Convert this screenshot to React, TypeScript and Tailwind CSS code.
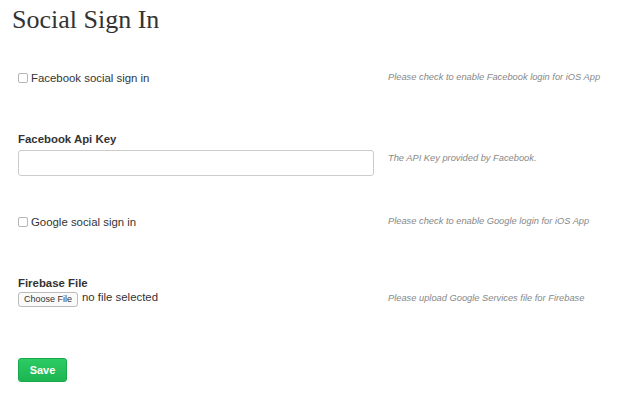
export default function App() {
  const sans = { fontFamily: '"Liberation Sans", Arial, sans-serif' }
  return (
    <div className="w-[624px] h-[405px] bg-white text-[#333]" style={sans}>
      <h1
        className="pl-[12px] pt-[3px] text-[26px] leading-[34px] text-[#333]"
        style={{ fontFamily: '"Liberation Serif", Georgia, serif' }}
      >
        Social Sign In
      </h1>

      {/* Facebook toggle */}
      <div className="mt-[33px] flex items-center">
        <label className="flex w-[356px] items-center gap-[3px] pl-[18px] text-[11.4px] leading-[16px]">
          <input type="checkbox" className="h-[10px] w-[10px] appearance-none rounded-[2px] border border-[#b5b5b5] bg-white" />
          Facebook social sign in
        </label>
        <p className="pl-[32px] text-[9.3px] italic text-[#888]">Please check to enable Facebook login for iOS App</p>
      </div>

      {/* Facebook key */}
      <div className="mt-[46px] flex">
        <div className="w-[374px] pl-[18px]">
          <div className="text-[11.4px] font-bold leading-[14px] text-[#333]">Facebook Api Key</div>
          <input
            type="text"
            className="mt-[4px] h-[26px] w-[356px] rounded-[3px] border border-[#ccc] bg-white"
          />
        </div>
        <p className="pl-[14px] pt-[20px] text-[9.3px] italic text-[#888]">The API Key provided by Facebook.</p>
      </div>

      {/* Google toggle */}
      <div className="mt-[38px] flex items-center">
        <label className="flex w-[356px] items-center gap-[3px] pl-[18px] text-[11.4px] leading-[16px]">
          <input type="checkbox" className="h-[10px] w-[10px] appearance-none rounded-[2px] border border-[#b5b5b5] bg-white" />
          Google social sign in
        </label>
        <p className="pl-[32px] text-[9.3px] italic text-[#888]">Please check to enable Google login for iOS App</p>
      </div>

      {/* Firebase file */}
      <div className="mt-[46px] flex">
        <div className="w-[374px] pl-[18px]">
          <div className="text-[11.4px] font-bold leading-[14px] text-[#333]">Firebase File</div>
          <div className="flex items-start gap-[4px]">
            <button className="mt-[2px] h-[15px] rounded-[3px] border border-[#bbb] bg-[#fafafa] px-[5px] text-[9px] leading-[13px] text-[#333]">
              Choose File
            </button>
            <span className="text-[11.4px] leading-[14px]">no file selected</span>
          </div>
        </div>
        <p className="pl-[14px] pt-[16px] text-[9.3px] italic text-[#888]">Please upload Google Services file for Firebase</p>
      </div>

      <div className="mt-[50px] pl-[18px]">
        <button className="h-[24px] w-[49px] rounded-[3px] border border-[#17a84a] bg-gradient-to-b from-[#2ccb63] to-[#1cb552] text-[11px] font-bold text-white">
          Save
        </button>
      </div>
    </div>
  )
}
